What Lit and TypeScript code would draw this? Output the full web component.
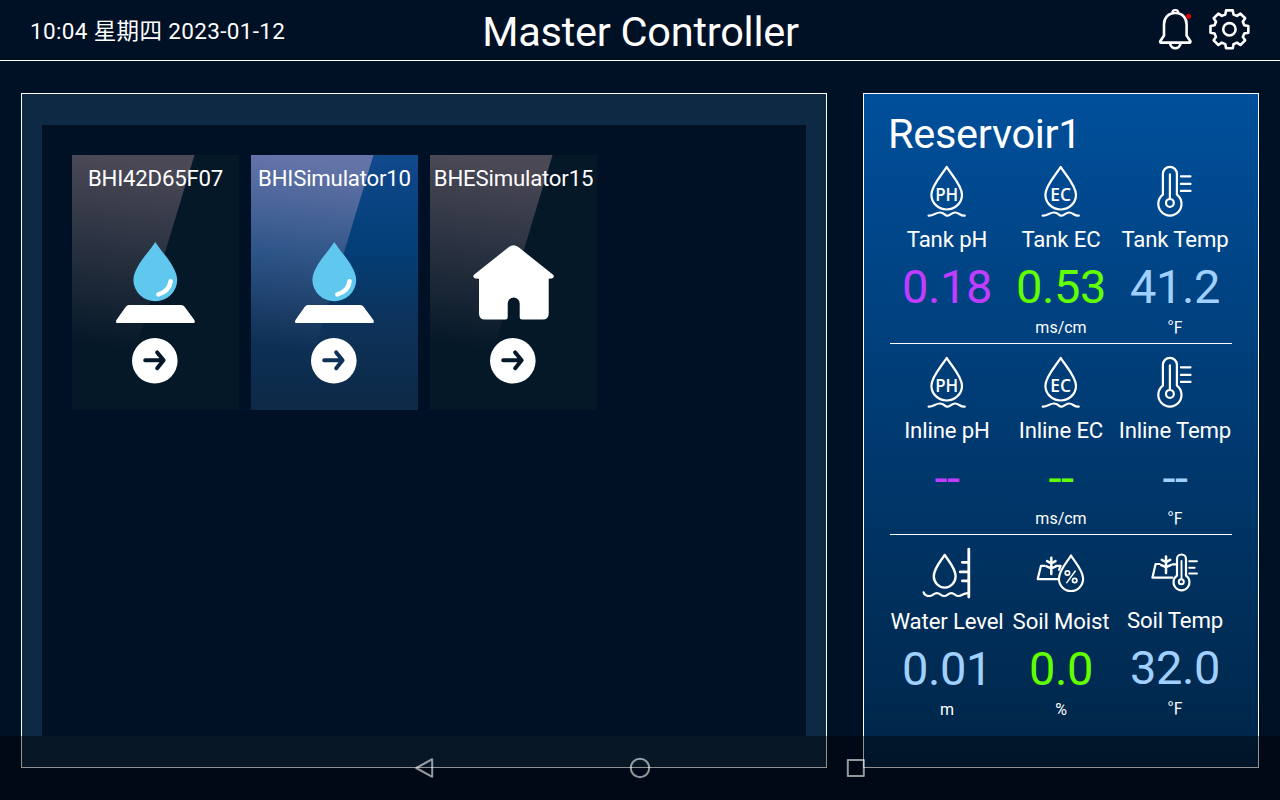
import { LitElement, html, svg, css, nothing } from "lit";
import { customElement, property } from "lit/decorators.js";

type IconName = "ph" | "ec" | "temp" | "level" | "moist" | "soiltemp";

interface Reading {
  icon: IconName;
  label: string;
  value: string;
  unit: string;
  tone: "violet" | "green" | "sky";
  raised?: boolean;
}

interface Device {
  name: string;
  kind: "drip" | "house";
  active: boolean;
}

const DEVICES: Device[] = [
  { name: "BHI42D65F07", kind: "drip", active: false },
  { name: "BHISimulator10", kind: "drip", active: true },
  { name: "BHESimulator15", kind: "house", active: false },
];

const ROWS: Reading[][] = [
  [
    { icon: "ph", label: "Tank pH", value: "0.18", unit: "", tone: "violet" },
    { icon: "ec", label: "Tank EC", value: "0.53", unit: "ms/cm", tone: "green" },
    { icon: "temp", label: "Tank Temp", value: "41.2", unit: "℉", tone: "sky" },
  ],
  [
    { icon: "ph", label: "Inline pH", value: "--", unit: "", tone: "violet" },
    { icon: "ec", label: "Inline EC", value: "--", unit: "ms/cm", tone: "green" },
    { icon: "temp", label: "Inline Temp", value: "--", unit: "℉", tone: "sky" },
  ],
  [
    { icon: "level", label: "Water Level", value: "0.01", unit: "m", tone: "sky" },
    { icon: "moist", label: "Soil Moist", value: "0.0", unit: "%", tone: "green" },
    { icon: "soiltemp", label: "Soil Temp", value: "32.0", unit: "℉", tone: "sky", raised: true },
  ],
];

const labelledDrop = (text: string, width: number) => svg`
  <path d="M24.7 1.4C20.5 8.5 9.4 20 9.4 29.2A15.3 14.8 0 0 0 40 29.2C40 20 28.9 8.5 24.7 1.4Z" />
  <path d="M6.6 50.2C11.5 50.6 13.5 47 18 47S22.5 50.2 25.2 50.2S29.5 47 33.2 47S38 50.6 42.8 50.2" />
  <text class="glyph" x="24.7" y="35.9" text-anchor="middle" textLength=${width} lengthAdjust="spacingAndGlyphs">${text}</text>`;

const plant = (x: number, y: number) => svg`
  <path stroke-width="2.5" d=${`M${x} ${y}v16.4M${x - 4.2} ${y + 3.4}l4.2 2.2l4.2-2.2M${x - 4.8} ${y + 8.6}l4.8 2l4.8-2`} />`;

const ICONS = {
  ph: labelledDrop("PH", 23),
  ec: labelledDrop("EC", 20.8),
  temp: svg`
    <path d="M12.9 29.2V8.3a7 7 0 0 1 14 0V29.2A11.6 11.6 0 1 1 12.9 29.2Z" />
    <path d="M19.9 8.8V33.6M30.9 10.8h9.6M30.9 18.4h9.6M30.9 25.4h9.6" />
    <circle cx="19.9" cy="37.4" r="3.9" />`,
  level: svg`
    <path d="M22.7 7.4C19.5 12.7 11.8 20.7 11.8 28.8A10.9 11.3 0 0 0 33.6 28.8C33.6 20.7 25.9 12.7 22.7 7.4Z" stroke-width="2.4" />
    <path d="M46.8 1.6V49.6M40.3 14.8h6M38.2 24.4h8M40.3 33.3h6" stroke-width="2.8" />
    <path d="M1.6 44.8C2.6 47.5 5 48.5 7.4 48.5C11 48.5 11.3 45.6 14.9 45.6S18.6 48.5 22.1 48.5S25.8 45.6 29.3 45.6S33 48.5 36.7 48.5S40.5 45.4 46.5 45.6" />`,
  moist: svg`
    <path d="M8.7 18.3H5L1.7 31.6H22.3M20 18.3h4.6l-1.6 4" />
    ${plant(15.3, 10.2)}
    <path d="M35 8C32 13.6 22.9 22.5 22.9 31.3A12.1 12.2 0 0 0 47.1 31.3C47.1 22.5 38 13.6 35 8Z" />
    <circle cx="31.4" cy="25.5" r="2.2" stroke-width="1.7" />
    <circle cx="38.7" cy="33" r="2.2" stroke-width="1.7" />
    <path d="M39.2 23.6L30.8 35.1" stroke-width="1.6" />`,
  soiltemp: svg`
    <path d="M9.6 16.5H5.6L2.4 30.2H22.4M22.5 16.8h3.6" />
    ${plant(16, 9)}
    <path d="M27 28.2V11.5a4.5 4.5 0 0 1 9 0V28.2A8 8 0 1 1 27 28.2Z" />
    <path d="M31.5 13.5V31.5M39.2 13.8h7.8M39.2 20.2h5.5M39.2 26h7.8" stroke-width="1.9" />
    <circle cx="31.3" cy="34.2" r="2.5" stroke-width="2" />`,
};

const gearPath = (() => {
  const pts: string[] = [];
  for (let i = 0; i < 8; i++) {
    const corners: [number, number][] = [[-15.5, 15.4], [-10, 19.2], [10, 19.2], [15.5, 15.4]];
    for (const [off, r] of corners) {
      const a = ((i * 45 + off - 90) * Math.PI) / 180;
      pts.push(`${(22.4 + r * Math.cos(a)).toFixed(2)} ${(22.3 + r * Math.sin(a)).toFixed(2)}`);
    }
  }
  return `M${pts.join("L")}Z`;
})();

@customElement("metric-cell")
class MetricCell extends LitElement {
  @property({ attribute: false }) reading!: Reading;

  static styles = css`
    :host { display: block; width: 114px; }
    .cell { display: flex; flex-direction: column; align-items: center; white-space: nowrap; }
    .icon { display: block; width: 50px; height: 52px; fill: none; stroke: #fff; stroke-width: 2.2; stroke-linecap: round; stroke-linejoin: round; overflow: visible; }
    .glyph { fill: #fff; stroke: none; font: 600 17.5px "Open Sans", "Noto Sans", sans-serif; }
    .label { margin-top: 8px; height: 28px; line-height: 28px; font-size: 22.2px; letter-spacing: -0.15px; }
    .value { margin-top: 6px; height: 56px; line-height: 56px; font-size: 47px; letter-spacing: -0.4px; }
    .unit { margin-top: 3px; height: 20px; line-height: 20px; font-size: 16px; }
    .raised .label { margin-top: 7px; }
    .violet { color: #c03cff; }
    .green { color: #62ff00; }
    .sky { color: #a0d0ff; }
  `;

  render() {
    const r = this.reading;
    return html`<div class="cell ${r.raised ? "raised" : ""}">
      <svg class="icon" viewBox="0 -0.5 50 52">${ICONS[r.icon]}</svg>
      <div class="label">${r.label}</div>
      <div class="value ${r.tone}">${r.value}</div>
      <div class="unit">${r.unit || nothing}</div>
    </div>`;
  }
}

@customElement("device-card")
class DeviceCard extends LitElement {
  @property({ attribute: false }) device!: Device;

  static styles = css`
    :host { display: block; width: 167px; height: 255px; }
    .card {
      height: 255px; display: flex; flex-direction: column; align-items: center; white-space: nowrap; color: #fff;
      --cut: #04182a; background: #051828;
    }
    .active { --cut: #0e3158; background: linear-gradient(#11498d 0%, #033e76 38%, #0d325a 66%, #0d2946 100%); }
    .sheen {
      display: flex; flex-direction: column; align-items: center; width: 167px; height: 255px;
      isolation: isolate; position: relative;
    }
    .sheen::before {
      content: ""; position: absolute; inset: 0; z-index: -1;
      clip-path: polygon(0 0, 122.5px 0, 45.5px 255px, 0 255px);
      background: linear-gradient(188deg, rgba(255, 197, 204, 0.28) 8%, rgba(255, 197, 204, 0) 76%);
    }
    .active .sheen::before { background: linear-gradient(188deg, rgba(255, 195, 222, 0.35) 8%, rgba(255, 195, 222, 0) 76%); }
    .name { height: 28px; line-height: 28px; padding-top: 9px; font-size: 22.2px; letter-spacing: -0.2px; }
    .art { display: block; width: 167px; height: 90px; margin-top: 43px; }
    .go { display: block; width: 46px; height: 46px; margin-top: 13px; margin-right: 1px; }
  `;

  render() {
    const d = this.device;
    return html`<div class="card ${d.active ? "active" : ""}">
      <div class="sheen">
        <div class="name">${d.name}</div>
        <svg class="art" viewBox="0 80 167 90">
          ${d.kind === "drip"
            ? svg`
              <path fill="#60c8ee" d="M83.3 87C77.5 96.5 61.4 112 61.4 125A21.9 21.2 0 0 0 105.2 125C105.2 112 89.1 96.5 83.3 87Z" />
              <path d="M98.6 126.2Q97.2 136.3 86.4 139.4" fill="none" stroke="#fff" stroke-width="4.6" stroke-linecap="round" />
              <path fill="#fff" d="M57 150H109.3Q111.3 150 112.6 151.8L122 164.4Q124.3 168 120.5 168H46.2Q42.5 168 44.8 164.4L53.8 151.8Q55 150 57 150Z" />`
            : svg`
              <path fill="#fff" d="M79.2 91.8Q83.6 88.8 88 91.8L122.5 119.2Q124.8 121.2 123 123Q122.3 123.8 118.7 123.8V158.5Q118.7 164.5 112.7 164.5H92Q89.7 164.5 89.7 162.3V148.5A6 6 0 0 0 77.7 148.5V162.3Q77.7 164.5 75.5 164.5H55Q49 164.5 49 158.5V123.8Q45 123.8 44.2 123Q42.2 121.2 44.6 119.2Z" />`}
        </svg>
        <svg class="go" viewBox="0 0 46 46">
          <circle cx="22.8" cy="22.8" r="22.8" fill="#fff" />
          <path d="M13.2 22.3H31.3M25.2 14.4L31.6 22.3L25.2 30.2" fill="none" stroke="var(--cut)" stroke-width="4" stroke-linecap="round" stroke-linejoin="round" />
        </svg>
      </div>
    </div>`;
  }
}

@customElement("app-root")
class AppRoot extends LitElement {
  static styles = css`
    :host {
      display: block; position: relative; width: 1280px; height: 800px; overflow: hidden; background: #001126; color: #fff;
      font-family: Roboto, "Noto Sans CJK SC", sans-serif;
    }
    * { box-sizing: border-box; }
    .header {
      display: grid; grid-template-columns: 1fr auto 1fr; align-items: start; height: 61px;
      border-bottom: 1px solid #fff; padding: 0 29px 0 30px; white-space: nowrap;
    }
    .clock { padding-top: 17px; line-height: 28px; font-size: 22.5px; letter-spacing: 0.35px; }
    .title { padding-top: 7px; line-height: 50px; font-size: 41.5px; letter-spacing: -0.25px; }
    .actions { display: flex; justify-content: flex-end; gap: 12px; padding-top: 7px; }
    .actions svg { display: block; height: 44px; fill: none; stroke: #fff; stroke-width: 2.6; stroke-linejoin: round; }
    .bell { width: 40px; }
    .gear { width: 44px; }
    .main { display: flex; gap: 36px; padding: 32px 21px 0; }
    .devices { width: 806px; height: 675px; border: 1px solid #fff; background: #0d2943; padding: 31px 20px; }
    .stage { height: 611px; background: #001126; padding: 30px; display: flex; gap: 12px; align-items: flex-start; }
    .reservoir { width: 396px; height: 675px; border: 1px solid #fff; background: linear-gradient(#004f9b, #002547); padding: 15px 26px 0; }
    .heading { height: 44px; line-height: 50px; font-size: 41.5px; letter-spacing: -0.3px; margin-left: -2px; white-space: nowrap; }
    .row { display: flex; height: 191px; padding-top: 12px; border-bottom: 1px solid #fff; }
    .row:last-child { border-bottom: 0; }
    .nav {
      position: absolute; left: 0; right: 0; bottom: 0; height: 64px; background: rgba(0, 0, 0, 0.43);
      display: flex; justify-content: center; align-items: center;
    }
    .slot { width: 216px; display: flex; justify-content: center; }
    .slot svg { display: block; width: 24px; height: 24px; fill: none; stroke: rgba(255, 255, 255, 0.58); stroke-width: 2; stroke-linejoin: round; }
  `;

  render() {
    return html`
      <div class="header">
        <div class="clock">10:04 星期四 2023-01-12</div>
        <div class="title">Master Controller</div>
        <div class="actions">
          <svg class="bell" viewBox="0 0 40 44">
            <path d="M17.3 5.8A3 2.8 0 0 1 23.3 5.8" stroke-width="2.2" />
            <path d="M20.3 6C13 6 9 11 9 17.5V28.5L5.2 34.2Q4.8 35.6 6.2 35.6H34.4Q35.8 35.6 35.4 34.2L31.6 28.5V17.5C31.6 11 27.6 6 20.3 6Z" />
            <path d="M15 36.5Q16.2 41.3 20.3 41.3T25.6 36.5" />
            <circle cx="33.5" cy="9.3" r="2.6" fill="#d60000" stroke="none" />
          </svg>
          <svg class="gear" viewBox="0 0 44 44">
            <path d=${gearPath} />
            <circle cx="22.4" cy="22.3" r="6.2" />
          </svg>
        </div>
      </div>
      <div class="main">
        <div class="devices">
          <div class="stage">${DEVICES.map((d) => html`<device-card .device=${d}></device-card>`)}</div>
        </div>
        <div class="reservoir">
          <div class="heading">Reservoir1</div>
          ${ROWS.map((row) => html`<div class="row">${row.map((r) => html`<metric-cell .reading=${r}></metric-cell>`)}</div>`)}
        </div>
      </div>
      <div class="nav">
        <div class="slot"><svg viewBox="0 0 24 24"><path d="M4.2 12L20.2 3.2V20.8Z" /></svg></div>
        <div class="slot"><svg viewBox="0 0 24 24"><circle cx="12" cy="12" r="9.2" /></svg></div>
        <div class="slot"><svg viewBox="0 0 24 24"><rect x="3.8" y="4" width="16" height="16" /></svg></div>
      </div>`;
  }
}
